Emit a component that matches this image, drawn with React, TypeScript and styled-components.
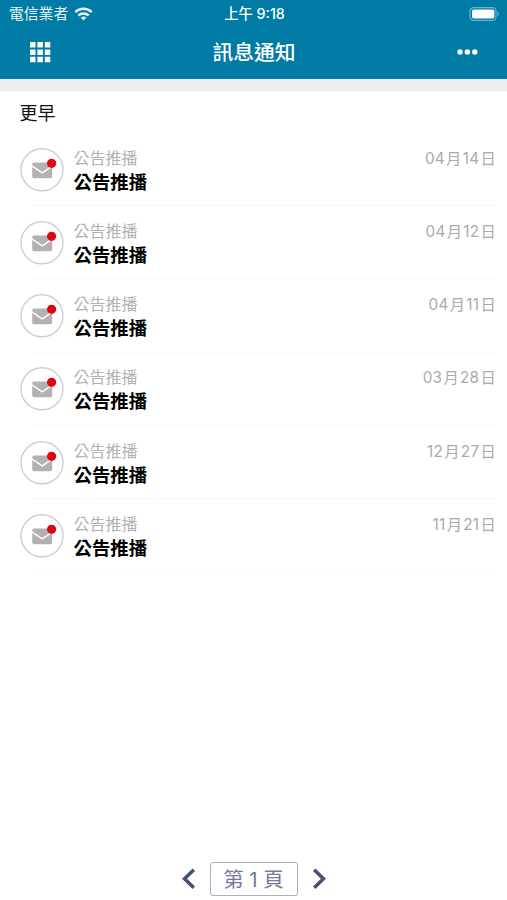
import React from "react";
import styled, { createGlobalStyle } from "styled-components";

const Global = createGlobalStyle`
  * { box-sizing: border-box; }
  body {
    margin: 0;
    background: #fff;
    font-family: Inter, "Noto Sans CJK TC", sans-serif;
  }
`;

const Screen = styled.div`
  display: flex;
  flex-direction: column;
  width: 100%;
  height: 900px;
  overflow: hidden;
  background: #fff;
`;

const Header = styled.header`
  height: 79px;
  background: #007ba5;
  color: #fff;
`;

const StatusBar = styled.div`
  display: grid;
  grid-template-columns: 1fr auto 1fr;
  align-items: center;
  height: 27px;
  padding: 0 7px 0 9px;
  font-size: 14.8px;
  line-height: 27px;
`;

const Carrier = styled.div`
  display: flex;
  align-items: center;
  gap: 6px;
  opacity: 0.9;
`;

const CarrierName = styled.span`
  padding-top: 2px;
  line-height: 25px;
`;

const Clock = styled.div`
  font-size: 14.3px;
  font-weight: 500;
`;

const BatterySlot = styled.div`
  display: flex;
  justify-content: flex-end;
`;

const NavBar = styled.div`
  display: grid;
  grid-template-columns: 1fr auto 1fr;
  align-items: center;
  height: 50px;
  padding: 0 29px 0 30px;
`;

const Title = styled.h1`
  margin: 0;
  padding-top: 2px;
  font-size: 20.8px;
  font-weight: 500;
  line-height: 30px;
`;

const IconButton = styled.button<{ $end?: boolean }>`
  display: flex;
  justify-self: ${(p) => (p.$end ? "end" : "start")};
  padding: 0;
  border: 0;
  background: none;
  color: inherit;
`;

const Strip = styled.div`
  height: 12px;
  background: #eeeded;
`;

const SectionTitle = styled.h2`
  margin: 0;
  height: 42px;
  padding-left: 19.5px;
  color: #111;
  font-size: 18px;
  font-weight: 400;
  line-height: 45px;
`;

const List = styled.ul`
  flex: 1;
  margin: 0;
  padding: 0 11px 0 20px;
  list-style: none;
`;

const Row = styled.li`
  display: flex;
  height: 73.3px;
  padding-top: 14.5px;
`;

const Avatar = styled.div`
  flex: none;
  width: 44px;
  height: 44px;
`;

const Body = styled.div`
  flex: 1;
  margin-left: 9.5px;
`;

const Category = styled.div`
  color: #b1b1b1;
  font-size: 16px;
  line-height: 20px;
`;

const Subject = styled.div`
  margin-top: 1px;
  color: #000;
  font-size: 18.4px;
  font-weight: 700;
  line-height: 26px;
`;

const DateText = styled.time`
  display: flex;
  align-items: baseline;
  gap: 1px;
  height: 20px;
  color: #aaa;
  font-size: 15.3px;
  letter-spacing: 0.3px;
  line-height: 21px;
`;

const Divider = styled.li`
  height: 1px;
  margin: -1px 0 0 11px;
  background: #f9f9f9;
`;

const Pager = styled.nav`
  display: flex;
  align-items: center;
  justify-content: center;
  height: 42px;
  gap: 14px;
  color: #46517a;
`;

const PageBox = styled.div`
  width: 88px;
  height: 34px;
  border: 1.5px solid #a9afc6;
  border-radius: 3px;
  color: #747b9b;
  font-size: 20.4px;
  line-height: 34px;
  text-align: center;
  white-space: pre;
`;

const WifiIcon = () => (
  <svg width="19" height="14" viewBox="0 0 19 14" fill="none" stroke="#fff" strokeWidth="2.5">
    <path d="M1.2 5.1C5.8.7 13.2.7 17.8 5.1" />
    <path d="M4.3 8.5C7.2 5.8 11.8 5.8 14.7 8.5" />
    <path d="M6.7 10.7Q9.5 8.4 12.3 10.7L9.5 13.6Z" fill="#fff" stroke="none" />
  </svg>
);

const BatteryIcon = () => (
  <svg width="31" height="14" viewBox="0 0 31 14">
    <rect x="1" y="0.7" width="26" height="12.6" rx="3.6" fill="none" stroke="#6fb3cc" strokeWidth="1.2" />
    <rect x="3" y="2.5" width="22.3" height="9" rx="1.7" fill="#fff" />
    <path d="M28.5 4.5Q31.3 7 28.5 9.5Z" fill="#6fb3cc" />
  </svg>
);

const GridIcon = () => (
  <svg width="21" height="21" viewBox="0 0 21 21" fill="#fff">
    {[0, 7.4, 14.8].map((y) =>
      [0, 7.4, 14.8].map((x) => <rect key={`${x}-${y}`} x={x} y={y} width="5.5" height="5.5" rx="0.3" />)
    )}
  </svg>
);

const MoreIcon = () => (
  <svg width="21" height="6" viewBox="0 0 21 6" fill="#fff">
    <circle cx="3" cy="3" r="2.7" />
    <circle cx="10.4" cy="3" r="2.7" />
    <circle cx="17.8" cy="3" r="2.7" />
  </svg>
);

const MailIcon = () => (
  <svg width="44" height="44" viewBox="0 0 44 44">
    <circle cx="22" cy="21.8" r="21" fill="#fff" stroke="#cecece" strokeWidth="1.4" />
    <path d="M14 14.6H30.4Q32.2 14.6 32.2 16.4V17.3L22.2 24L12.2 17.3V16.4Q12.2 14.6 14 14.6Z" fill="#b2b2b2" />
    <path d="M12.2 18.9L22.2 25.7L32.2 18.9V28.4Q32.2 30.2 30.4 30.2H14Q12.2 30.2 12.2 28.4Z" fill="#b2b2b2" />
    <circle cx="31.6" cy="15.3" r="4.6" fill="#db0711" />
  </svg>
);

const Chevron = ({ next = false }: { next?: boolean }) => (
  <svg width="15" height="22" viewBox="0 0 15 22" fill="none" stroke="currentColor" strokeWidth="3.6">
    <path d={next ? "M2.2 1.8L11.4 10.8L2.2 19.8" : "M12.8 1.8L3.6 10.8L12.8 19.8"} />
  </svg>
);

const dates = [
  ["04", "14"],
  ["04", "12"],
  ["04", "11"],
  ["03", "28"],
  ["12", "27"],
  ["11", "21"],
];

export default function App() {
  return (
    <Screen>
      <Global />
      <Header>
        <StatusBar>
          <Carrier>
            <CarrierName>電信業者</CarrierName>
            <WifiIcon />
          </Carrier>
          <Clock>上午 9:18</Clock>
          <BatterySlot>
            <BatteryIcon />
          </BatterySlot>
        </StatusBar>
        <NavBar>
          <IconButton aria-label="選單">
            <GridIcon />
          </IconButton>
          <Title>訊息通知</Title>
          <IconButton $end aria-label="更多">
            <MoreIcon />
          </IconButton>
        </NavBar>
      </Header>
      <Strip />
      <SectionTitle>更早</SectionTitle>
      <List>
        {dates.map(([month, day]) => (
          <React.Fragment key={month + day}>
            <Row>
              <Avatar>
                <MailIcon />
              </Avatar>
              <Body>
                <Category>公告推播</Category>
                <Subject>公告推播</Subject>
              </Body>
              <DateText>
                <span>{month}</span>
                <span>月</span>
                <span>{day}</span>
                <span>日</span>
              </DateText>
            </Row>
            <Divider />
          </React.Fragment>
        ))}
      </List>
      <Pager>
        <Chevron />
        <PageBox>第 1 頁</PageBox>
        <Chevron next />
      </Pager>
    </Screen>
  );
}
